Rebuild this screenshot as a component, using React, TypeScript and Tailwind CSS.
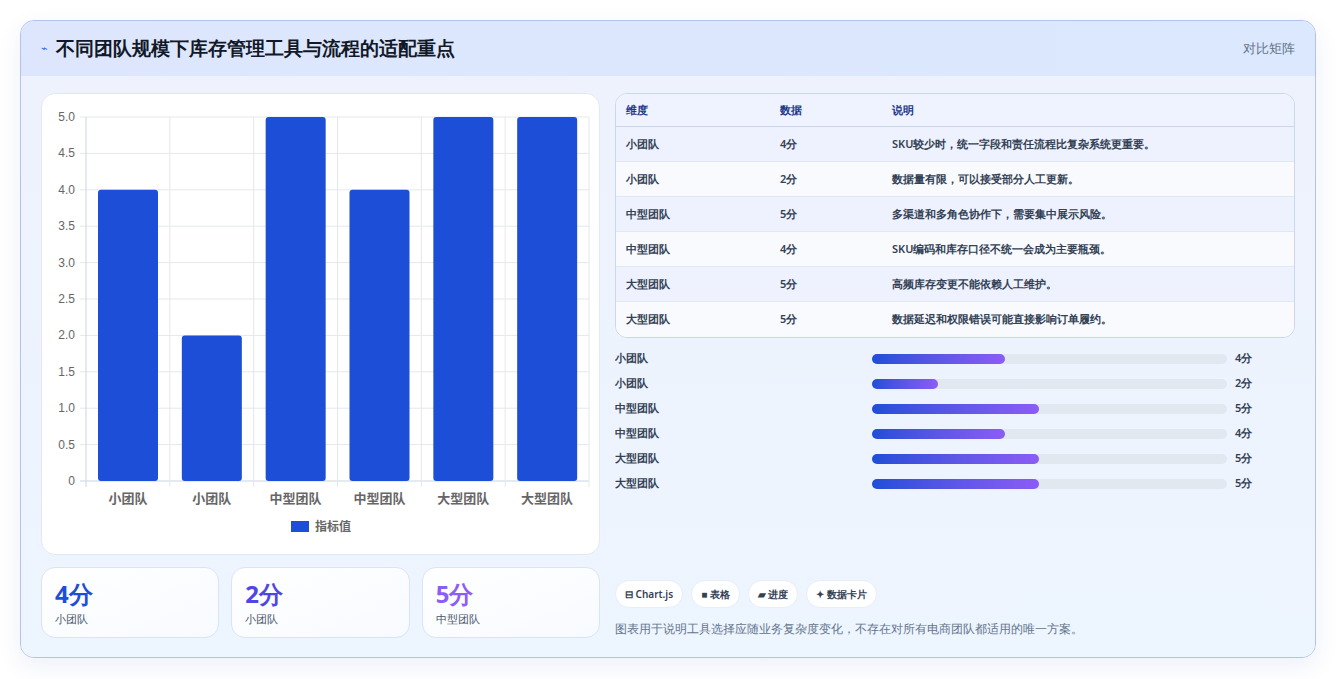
import React from "react";

const rows = [
  ["小团队", "4分", "SKU较少时，统一字段和责任流程比复杂系统更重要。"],
  ["小团队", "2分", "数据量有限，可以接受部分人工更新。"],
  ["中型团队", "5分", "多渠道和多角色协作下，需要集中展示风险。"],
  ["中型团队", "4分", "SKU编码和库存口径不统一会成为主要瓶颈。"],
  ["大型团队", "5分", "高频库存变更不能依赖人工维护。"],
  ["大型团队", "5分", "数据延迟和权限错误可能直接影响订单履约。"],
];
const vals = [4, 2, 5, 4, 5, 5];
const labels = ["小团队", "小团队", "中型团队", "中型团队", "大型团队", "大型团队"];
const fills: Record<number, number> = { 4: 133, 2: 66, 5: 167 };

function Chart() {
  const x0 = 44, x1 = 547, y0 = 23, y1 = 387;
  const cw = (x1 - x0) / 6;
  const ticks = [0, 0.5, 1, 1.5, 2, 2.5, 3, 3.5, 4, 4.5, 5];
  const ys = (v: number) => y1 - (v / 5) * (y1 - y0);
  return (
    <svg width="558" height="461" className="block">
      {ticks.map((t) => (
        <g key={t}>
          <line x1={x0 - 6} x2={x1} y1={ys(t)} y2={ys(t)} stroke={t === 0 ? "#cbd5e1" : "#e5e7eb"} />
          <text x={x0 - 11} y={ys(t) + 4} textAnchor="end" fontSize="12" fill="#666" fontFamily="Liberation Sans, sans-serif">
            {t === 0 ? "0" : t.toFixed(1)}
          </text>
        </g>
      ))}
      {Array.from({ length: 7 }).map((_, i) => (
        <line key={i} x1={x0 + i * cw} x2={x0 + i * cw} y1={y0} y2={y1 + 6} stroke={i === 0 ? "#cbd5e1" : "#e5e7eb"} />
      ))}
      {vals.map((v, i) => (
        <rect key={i} x={x0 + i * cw + 12} y={ys(v)} width={60} height={y1 - ys(v)} rx={3} fill="#1d4ed8" />
      ))}
      {labels.map((l, i) => (
        <text key={i} x={x0 + i * cw + cw / 2} y={409} textAnchor="middle" fontSize="13" fontWeight="600" fill="#666" fontFamily="Noto Sans CJK SC, sans-serif">
          {l}
        </text>
      ))}
      <rect x={249} y={427} width={18} height={11} fill="#1d4ed8" />
      <text x={273} y={437} fontSize="12" fontWeight="600" fill="#666" fontFamily="Noto Sans CJK SC, sans-serif">指标值</text>
    </svg>
  );
}

export default function App() {
  return (
    <div className="w-[1336px] h-[679px] bg-white pt-5 pl-5 font-['Noto_Sans_CJK_SC',sans-serif]">
      <div className="w-[1296px] h-[638px] rounded-[14px] border border-[#b4c3ee] bg-[#eef4ff] overflow-hidden shadow-[0_8px_24px_rgba(30,64,175,0.08)] flex flex-col">
        <div className="h-[55px] shrink-0 bg-gradient-to-r from-[#dde6fd] to-[#dbe8fd] flex items-center justify-between px-5">
          <div className="flex items-center gap-2">
            <span className="text-[#2563eb] text-[11px]">⌁</span>
            <span className="text-[19px] font-bold text-[#111827]">不同团队规模下库存管理工具与流程的适配重点</span>
          </div>
          <span className="text-[13px] text-[#64748b]">对比矩阵</span>
        </div>
        <div className="flex flex-1 gap-[15px] px-5 pt-[17px] pb-[19px] bg-gradient-to-b from-[#eef2fd] to-[#edf5ff]">
          <div className="w-[559px] flex flex-col gap-3">
            <div className="h-[462px] bg-white rounded-[14px] border border-[#e2e8f4]">
              <Chart />
            </div>
            <div className="flex gap-3 flex-1">
              {[
                ["4分", "小团队", "text-[#1d4ed8]"],
                ["2分", "小团队", "text-[#4f46e5]"],
                ["5分", "中型团队", "text-[#8b5cf6]"],
              ].map(([v, l, c], i) => (
                <div key={i} className="flex-1 rounded-[14px] border border-[#dbe4f5] bg-gradient-to-br from-white to-[#f7faff] px-[13px] pt-[10px]">
                  <div className={`text-[24px] leading-[32px] font-bold ${c}`}>{v}</div>
                  <div className="text-[11px] text-[#475569] mt-[1px]">{l}</div>
                </div>
              ))}
            </div>
          </div>
          <div className="flex-1 flex flex-col">
            <div className="rounded-[12px] border border-[#cdd7ea] overflow-hidden text-[11px]">
              <div className="flex h-[33px] items-center bg-[#eef3ff] border-b border-[#cdd7ea] font-semibold text-[#1e3a8a]">
                <div className="w-[164px] pl-[10px]">维度</div>
                <div className="w-[112px]">数据</div>
                <div>说明</div>
              </div>
              {rows.map((r, i) => (
                <div key={i} className={`flex h-[35px] items-center font-semibold text-[#334155] ${i % 2 === 0 ? "bg-[#eef2fe]" : "bg-[#f8fafd]"} ${i < 5 ? "border-b border-[#e2e8f0]" : ""}`}>
                  <div className="w-[164px] pl-[10px]">{r[0]}</div>
                  <div className="w-[112px]">{r[1]}</div>
                  <div>{r[2]}</div>
                </div>
              ))}
            </div>
            <div className="mt-[8px] flex flex-col">
              {vals.map((v, i) => (
                <div key={i} className="h-[25px] flex items-center text-[11px] font-semibold text-[#334155]">
                  <div className="w-[257px]">{labels[i]}</div>
                  <div className="w-[355px] h-[10px] rounded-full bg-[#e2e8f0]">
                    <div className="h-full rounded-full bg-gradient-to-r from-[#1d4ed8] to-[#8b5cf6]" style={{ width: fills[v] }} />
                  </div>
                  <div className="ml-[8px]">{v}分</div>
                </div>
              ))}
            </div>
            <div className="flex-1" />
            <div className="flex gap-2 text-[10px] font-semibold text-[#334155]">
              {["⊟ Chart.js", "■ 表格", "▰ 进度", "✦ 数据卡片"].map((t) => (
                <span key={t} className="h-[28px] px-[9px] flex items-center rounded-full bg-white border border-[#e8eef8]">{t}</span>
              ))}
            </div>
            <div className="mt-[12px] text-[12px] text-[#64748b]">图表用于说明工具选择应随业务复杂度变化，不存在对所有电商团队都适用的唯一方案。</div>
          </div>
        </div>
      </div>
    </div>
  );
}
